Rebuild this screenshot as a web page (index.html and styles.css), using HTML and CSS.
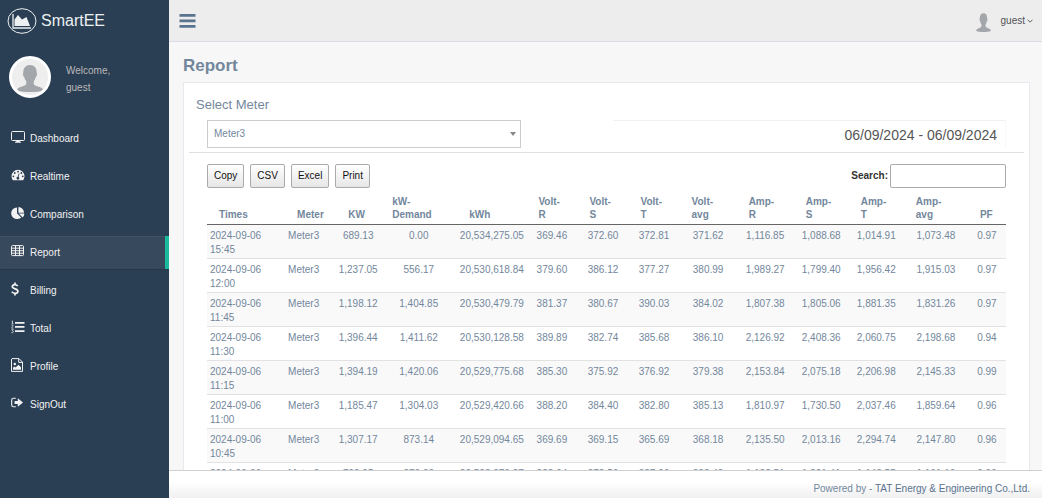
FILE: index.html
```html
<!DOCTYPE html>
<html lang="en">
<head>
<meta charset="utf-8">
<title>SmartEE - Report</title>
<link rel="stylesheet" href="styles.css">
</head>
<body>
<svg class="defs" aria-hidden="true">
  <symbol id="person" viewBox="0 0 36 36">
    <path d="M18 3.500c5 0 8 3.500 8 8.500 0 1.500.8 1.600.5 3.300-.3 1.600-1.300 2-1.600 3-.5 2-1.300 3.600-2.400 4.700v3c0 2 3.500 2.600 7 4 2.300.8 3.800 2 4.500 4C30 36 24 36 18 36S6 36 2 34c.7-2 2.200-3.200 4.500-4 3.500-1.400 7-2 7-4v-3c-1.100-1.100-1.900-2.700-2.400-4.700-.3-1-1.300-1.400-1.600-3C9.200 13.600 10 13.500 10 12c0-5 3-8.500 8-8.500z"/>
  </symbol>
</svg>
<div class="app">
  <aside class="sidebar">
    <a class="brand" href="#">
      <svg class="brand-icon" viewBox="0 0 30 26" aria-hidden="true">
        <ellipse cx="15" cy="13" rx="14" ry="12.300" fill="none" stroke="currentColor"/>
        <path d="M6 6v14h18" fill="none" stroke="currentColor" stroke-width="1.300"/>
        <path d="M7.500 18v-6.500l3.500-4.500 4 4.500 4.500-2.500 3.500 9z" fill="currentColor"/>
      </svg>
      <span>SmartEE</span>
    </a>
    <div class="profile">
      <span class="avatar"><svg viewBox="0 0 36 36" aria-hidden="true"><use href="#person"/></svg></span>
      <div class="welcome"><div>Welcome,</div><div>guest</div></div>
    </div>
    <nav class="menu">
      <a href="#"><svg viewBox="0 0 14 12" aria-hidden="true"><rect x=".5" y=".5" width="13" height="9" rx="1" fill="none" stroke="currentColor"/><path d="M5.500 9.500h3l.4 1.300H10v.9H4v-.9h1.100z"/></svg>Dashboard</a>
      <a href="#"><svg viewBox="0 0 14 12" aria-hidden="true"><path fill-rule="evenodd" d="M7 .8a6.500 6.500 0 0 1 6.500 6.500c0 1.300-.4 2.500-1 3.500-.2.300-.3.400-.6.400H2.100c-.3 0-.4-.1-.6-.4-.6-1-1-2.200-1-3.500A6.500 6.500 0 0 1 7 .8zM2.300 6.400a.9.900 0 1 0 .1 1.800.9.900 0 0 0-.1-1.800zM3.700 3.100a.9.900 0 1 0 .1 1.800.9.900 0 0 0-.1-1.800zM7 1.700a.9.900 0 1 0 .1 1.800A.9.900 0 0 0 7 1.700zM10.300 3.100a.9.900 0 1 0 .1 1.800.9.900 0 0 0-.1-1.800zM11.700 6.400a.9.900 0 1 0 .1 1.800.9.900 0 0 0-.1-1.800zM7.700 4.400l-.9 3.300a1.400 1.400 0 1 0 .8.200l.9-3.300z"/></svg>Realtime</a>
      <a href="#"><svg viewBox="0 0 14 13" aria-hidden="true"><path d="M6 1v5.800l4.100 4.100A5.800 5.800 0 1 1 6 1z"/><path d="M7.400.5a5.700 5.700 0 0 1 5.600 5.700H7.400zM7.700 7.100h5.600c0 1.500-.6 2.900-1.600 3.900z"/></svg>Comparison</a>
      <a href="#" class="active" aria-current="page"><svg viewBox="0 0 14 12" aria-hidden="true"><path fill="none" stroke="currentColor" d="M1.500.6h10q1 0 1 1v8q0 1-1 1h-10q-1 0-1-1v-8q0-1 1-1zM.5 3.200h12M.5 5.700h12M.5 8.200h12M4.500 1v9.500M8.500 1v9.500"/></svg>Report</a>
      <a href="#"><svg viewBox="0 0 14 14" aria-hidden="true"><path fill="none" stroke="currentColor" stroke-width="1.700" d="M6.700 4C6 3.200 5 2.700 3.800 2.700 2.300 2.700 1.300 3.500 1.300 4.600c0 3 5.600 1.500 5.600 4.600 0 1.300-1.200 2.100-2.800 2.100-1.400 0-2.500-.5-3.300-1.500M4 .5v2.200M4 11.300v2.200"/></svg>Billing</a>
      <a href="#"><svg viewBox="0 0 14 13" aria-hidden="true"><path d="M4 1.500h9.500v1.700H4zM4 5.600h9.500v1.700H4zM4 9.700h9.500v1.700H4z"/><path fill="none" stroke="currentColor" stroke-width=".7" d="M.6 1l.9-.6v3M.5 3.400h2M.5 5.200c.6-.8 1.700-.5 1.700.2S.6 6.800.5 7.600h2M.5 9.200h1.800l-1 1.100c1.400 0 1.300 2-.1 2-.4 0-.7-.1-.9-.4"/></svg>Total</a>
      <a href="#"><svg viewBox="0 0 14 14" aria-hidden="true"><path fill="none" stroke="currentColor" d="M1 .6h7l3.500 3.500v9.300H.5V1.100zM7.700.8v3.600h3.700"/><circle cx="3.800" cy="6" r="1.200"/><path d="M2 11.800v-2l1.500-1.300 1 1L7.500 6.800 10 9.300v2.500z"/></svg>Profile</a>
      <a href="#"><svg viewBox="0 0 14 12" aria-hidden="true"><path fill="none" stroke="currentColor" stroke-width="1.100" d="M4.800 1.300H2.500Q.7 1.300.7 3.100v4.800q0 1.800 1.800 1.800h2.300"/><path d="M3.600 4h3.200V1.200l5.200 4.300-5.200 4.300V7H3.600z"/></svg>SignOut</a>
    </nav>
  </aside>
  <div class="main">
    <header class="topbar">
      <button class="toggle" type="button" aria-label="Toggle menu"><svg viewBox="0 0 17 14" aria-hidden="true"><path d="M.5 0h16v2.700H.5zM.5 5.500h16v2.700H.5zM.5 11h16v2.700H.5z"/></svg></button>
      <button class="user" type="button"><svg class="user-pic" viewBox="2 3 32 33" preserveAspectRatio="none" aria-hidden="true"><use href="#person" width="36" height="36"/></svg><span>guest</span><svg class="chevron" viewBox="0 0 6 4" aria-hidden="true"><path d="M.5.700L3 3.200 5.500.7" fill="none" stroke="currentColor" stroke-width=".9"/></svg></button>
    </header>
    <main class="content">
      <h1>Report</h1>
      <section class="panel">
        <h2><label for="meter">Select Meter</label></h2>
        <div class="filters">
          <div class="select-wrap">
            <select id="meter"><option>Meter3</option></select>
            <svg class="caret" viewBox="0 0 6 4" aria-hidden="true"><path d="M0 0h6L3 4z"/></svg>
          </div>
          <button class="daterange" type="button">06/09/2024 - 06/09/2024</button>
        </div>
        <hr>
        <div class="tools">
          <div class="exports"><button type="button">Copy</button><button type="button">CSV</button><button type="button">Excel</button><button type="button">Print</button></div>
          <label class="search">Search:<input type="search"></label>
        </div>
        <table>
          <colgroup><col class="w-time"><col class="w-meter"><col class="w-kw"><col class="w-demand"><col class="w-kwh"><col class="w-volt"><col class="w-volt"><col class="w-volt"><col class="w-vavg"><col class="w-vavg"><col class="w-amp"><col class="w-amp"><col class="w-aavg"><col class="w-pf"></colgroup>
          <thead><tr><th>Times</th><th>Meter</th><th>KW</th><th>kW-Demand</th><th>kWh</th><th>Volt-R</th><th>Volt-S</th><th>Volt-T</th><th>Volt-avg</th><th>Amp-R</th><th>Amp-S</th><th>Amp-T</th><th>Amp-avg</th><th>PF</th></tr></thead>
          <tbody>
            <tr><td>2024-09-06 15:45</td><td>Meter3</td><td>689.13</td><td>0.00</td><td>20,534,275.05</td><td>369.46</td><td>372.60</td><td>372.81</td><td>371.62</td><td>1,116.85</td><td>1,088.68</td><td>1,014.91</td><td>1,073.48</td><td>0.97</td></tr>
            <tr><td>2024-09-06 12:00</td><td>Meter3</td><td>1,237.05</td><td>556.17</td><td>20,530,618.84</td><td>379.60</td><td>386.12</td><td>377.27</td><td>380.99</td><td>1,989.27</td><td>1,799.40</td><td>1,956.42</td><td>1,915.03</td><td>0.97</td></tr>
            <tr><td>2024-09-06 11:45</td><td>Meter3</td><td>1,198.12</td><td>1,404.85</td><td>20,530,479.79</td><td>381.37</td><td>380.67</td><td>390.03</td><td>384.02</td><td>1,807.38</td><td>1,805.06</td><td>1,881.35</td><td>1,831.26</td><td>0.97</td></tr>
            <tr><td>2024-09-06 11:30</td><td>Meter3</td><td>1,396.44</td><td>1,411.62</td><td>20,530,128.58</td><td>389.89</td><td>382.74</td><td>385.68</td><td>386.10</td><td>2,126.92</td><td>2,408.36</td><td>2,060.75</td><td>2,198.68</td><td>0.94</td></tr>
            <tr><td>2024-09-06 11:15</td><td>Meter3</td><td>1,394.19</td><td>1,420.06</td><td>20,529,775.68</td><td>385.30</td><td>375.92</td><td>376.92</td><td>379.38</td><td>2,153.84</td><td>2,075.18</td><td>2,206.98</td><td>2,145.33</td><td>0.99</td></tr>
            <tr><td>2024-09-06 11:00</td><td>Meter3</td><td>1,185.47</td><td>1,304.03</td><td>20,529,420.66</td><td>388.20</td><td>384.40</td><td>382.80</td><td>385.13</td><td>1,810.97</td><td>1,730.50</td><td>2,037.46</td><td>1,859.64</td><td>0.96</td></tr>
            <tr><td>2024-09-06 10:45</td><td>Meter3</td><td>1,307.17</td><td>873.14</td><td>20,529,094.65</td><td>369.69</td><td>369.15</td><td>365.69</td><td>368.18</td><td>2,135.50</td><td>2,013.16</td><td>2,294.74</td><td>2,147.80</td><td>0.96</td></tr>
            <tr><td>2024-09-06 10:30</td><td>Meter3</td><td>798.95</td><td>876.88</td><td>20,528,876.37</td><td>388.64</td><td>378.56</td><td>387.96</td><td>388.48</td><td>1,122.51</td><td>1,221.41</td><td>1,148.55</td><td>1,161.16</td><td>0.96</td></tr>
          </tbody>
        </table>
      </section>
    </main>
    <footer>Powered by - <a href="#">TAT Energy &amp; Engineering Co.,Ltd.</a></footer>
  </div>
</div>
</body>
</html>
```
FILE: styles.css
```css
* { box-sizing: border-box; }
body {
  margin: 0;
  font-family: "Liberation Sans", Arial, Helvetica, sans-serif;
  font-size: 10px;
  line-height: 14px;
  color: #73879c;
  background: #fff;
}
a { color: inherit; text-decoration: none; }
button, input, select { font: inherit; color: inherit; }
svg { fill: currentColor; flex: none; }
.defs { position: absolute; width: 0; height: 0; }

.app {
  display: flex;
  height: 100vh;
  padding-bottom: 2px;
  overflow: hidden;
}

.sidebar {
  width: 169px;
  flex: none;
  background: #2a3f54;
  color: #f2f2f2;
}
.brand {
  display: flex;
  align-items: center;
  gap: 4px;
  height: 42px;
  padding-left: 7px;
  font-size: 16px;
  line-height: 20px;
  color: #ecf0f1;
}
.brand-icon { width: 30px; height: 26px; }
.profile {
  display: flex;
  align-items: center;
  gap: 15px;
  height: 70px;
  padding-left: 9px;
}
.avatar {
  width: 42px;
  height: 42px;
  padding: 3px;
  border: 3px solid #fff;
  border-radius: 50%;
  background: #eee;
  color: #a3a6aa;
  overflow: hidden;
}
.avatar svg { display: block; width: 30px; height: 30px; }
.welcome { line-height: 17px; color: #bab8b8; padding-top: 3px; }
.menu {
  display: flex;
  flex-direction: column;
  gap: 5px;
  padding-top: 10px;
}
.menu a {
  display: flex;
  align-items: center;
  gap: 5px;
  height: 33px;
  padding-left: 11px;
  border-right: 4px solid transparent;
}
.menu svg { width: 14px; height: 14px; margin-bottom: 3px; }
.menu .active {
  border-right-color: #1abb9c;
  background: #37495d;
  box-shadow: inset 0 1px #3f5165, 0 1px #24374b;
}

.main {
  display: flex;
  flex-direction: column;
  flex: 1;
  min-width: 0;
  background: #f7f7f7;
}
.topbar {
  display: flex;
  justify-content: space-between;
  align-items: center;
  flex: none;
  height: 42px;
  padding: 0 9px 0 10px;
  border-bottom: 1px solid #d9dee4;
  background: #ededed;
}
.topbar button {
  display: flex;
  align-items: center;
  padding: 0;
  border: 0;
  background: none;
}
.toggle { color: #5a738e; }
.toggle svg { width: 17px; height: 14px; }
.user { color: #515356; }
.user-pic { width: 15px; height: 19px; margin: 3px 10px 0 0; color: #a3a6aa; }
.chevron { width: 6px; height: 4px; margin-left: 2px; }

.content {
  flex: 1;
  min-height: 0;
  padding: 12px 12px 0 14px;
  overflow: hidden;
}
h1 {
  margin: 0 0 4px;
  font-size: 17px;
  line-height: 24px;
  font-weight: 700;
}
.panel {
  padding: 12px 23px;
  border: 1px solid #e6e9ed;
  background: #fff;
}
h2 {
  margin: 0 0 5px -11px;
  font-size: 13px;
  line-height: 20px;
  font-weight: 400;
}
.filters {
  display: grid;
  grid-template-columns: 4fr 5fr;
  column-gap: 92px;
}
.select-wrap { position: relative; }
select {
  display: block;
  width: 100%;
  height: 28px;
  padding: 0 6px;
  border: 1px solid #ccc;
  border-radius: 0;
  background: #fff;
  appearance: none;
}
.caret {
  position: absolute;
  right: 5px;
  top: 12px;
  width: 6px;
  height: 4px;
  color: #888;
  pointer-events: none;
}
.daterange {
  height: 28px;
  padding: 0 8px;
  border: 0;
  border-top: 1px solid #f1f1f1;
  border-right: 1px solid #f8f8f8;
  background: #fff;
  font-size: 14px;
  color: #555;
  text-align: right;
}
hr {
  height: 1px;
  margin: 4px -18px 11px;
  border: 0;
  background: #dde0e3;
}
.tools {
  display: flex;
  justify-content: space-between;
  align-items: center;
  margin-bottom: 7px;
}
.exports { display: flex; gap: 6px; }
.exports button {
  height: 24px;
  padding: 0 6px;
  border: 1px solid #aaa;
  border-radius: 2px;
  background: linear-gradient(#fff, #e6e6e6);
  color: #111;
}
.search {
  display: flex;
  align-items: center;
  gap: 2px;
  font-weight: 700;
  color: #333;
}
.search input {
  width: 116px;
  height: 24px;
  padding: 0 4px;
  border: 1px solid #aaa;
  border-radius: 2px;
  background: #fff;
  font-weight: 400;
}

table {
  width: 100%;
  table-layout: fixed;
  border-collapse: separate;
  border-spacing: 0;
}
.w-time { width: 78px; }
.w-meter { width: 51px; }
.w-kw { width: 44px; }
.w-demand { width: 77px; }
.w-kwh { width: 69px; }
.w-volt { width: 51px; }
.w-vavg { width: 57px; }
.w-amp { width: 55px; }
.w-aavg { width: 64px; }
.w-pf { width: 38px; }
th {
  padding: 0 14px 3px 12px;
  border-bottom: 1px solid #666;
  line-height: 13px;
  font-weight: 700;
  text-align: left;
  vertical-align: bottom;
}
td {
  height: 34px;
  padding: 4px 0 1px;
  border-bottom: 1px solid #e2e2e2;
  text-align: center;
  vertical-align: top;
}
td:nth-child(-n+2) { padding-left: 3px; text-align: left; }
tbody tr:nth-child(odd) { background: #f9f9f9; }

footer {
  flex: none;
  padding: 11px 12px 2px;
  border-top: 1px solid #d0d0d0;
  background: linear-gradient(#fff 40%, #f0f0f0);
  text-align: right;
}
footer a { color: #5a738e; }
```
